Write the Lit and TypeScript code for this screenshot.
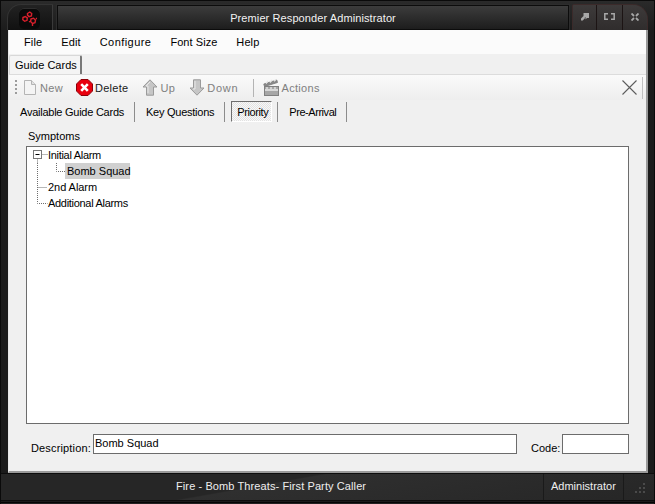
import { LitElement, html, css, svg } from "lit";
import { customElement } from "lit/decorators.js";

const newIcon = svg`<svg width="12" height="15" viewBox="0 0 12 15"><path d="M.5.5h7l4 4v10h-11z" fill="#f4f4f4" stroke="#b4b4b4"/><path d="M7.5.5v4h4" fill="#e2e2e2" stroke="#b4b4b4"/></svg>`;
const deleteIcon = svg`<svg width="17" height="17" viewBox="0 0 17 17"><path d="M5 .5h7l4.500 4.500v7l-4.500 4.500h-7l-4.500-4.500v-7z" fill="#e8000e" stroke="#8c0008" stroke-linejoin="round"/><path d="M5.200 5.200l6.600 6.600M11.800 5.200l-6.600 6.600" stroke="#fff" stroke-width="2.600"/></svg>`;
const upIcon = svg`<svg width="16" height="17" viewBox="0 0 16 17"><path d="M8 .8l7 7.200h-3.500v8.200h-7v-8.200h-3.500z" fill="#c6c6c6" stroke="#9a9a9a"/><path d="M8 3l-4 4h2v7" fill="none" stroke="#e8e8e8"/></svg>`;
const downIcon = svg`<svg width="16" height="17" viewBox="0 0 16 17"><path d="M8 16.200l7-7.200h-3.500v-8.200h-7v8.200h-3.500z" fill="#c6c6c6" stroke="#9a9a9a"/><path d="M6 2v8h-2" fill="none" stroke="#e8e8e8"/></svg>`;
const actionsIcon = svg`<svg width="17" height="17" viewBox="0 0 17 17"><path d="M1.500 7.500l13-4 -.7-2.500-13 4z" fill="#8a8a8a" stroke="#777" stroke-width=".8"/><path d="M3 4.500l2-2.500M7 3.500l2-2.500M11 2.200l2-1.700" stroke="#e6e6e6" stroke-width="1.300"/><rect x="1.500" y="7.500" width="14" height="9" fill="#a6a6a6" stroke="#808080"/><path d="M2 11h13" stroke="#e8e8e8" stroke-width="1.500"/><path d="M4 8v2M8 8v2M12 8v2" stroke="#e8e8e8" stroke-width="1.300"/></svg>`;
const logoIcon = svg`<svg width="15" height="15" viewBox="0 0 15 15" fill="none" stroke="#d8202c" stroke-width="1.400"><path d="M1 6.500l2.300-1 2 1.300-.3 2.500-2.300 1-1.900-1.500z"/><path d="M5.500 2.500l2.300-1.500 1.900 1.500-.3 2.500-2.400.6-1.500-1.500z"/><path d="M9 8l2.500-.8 2 1.800-.5 2.700-2.500.8-1.900-2z"/><path d="M10.500 13v2M14 8l1-1M7 11l1-.6"/></svg>`;
const minIcon = svg`<svg width="8" height="8" viewBox="0 0 8 8" fill="#a8a8a8"><path d="M2.500 0h5.500v5h-2l-1.500 1.500v-2.500h-2zM0 5.500l2.500-2.500 1.800 1.800-2.500 2.700h-1.800z"/></svg>`;
const maxIcon = svg`<svg width="11" height="7" viewBox="0 0 11 7" fill="none" stroke="#a8a8a8" stroke-width="1.500"><path d="M4 .8h-3.200v5.400h3.200M7 .8h3.200v5.400h-3.200"/></svg>`;
const closeIcon = svg`<svg width="8" height="8" viewBox="0 0 8 8" fill="none" stroke="#a8a8a8" stroke-width="1.800"><path d="M.5.500l2.500 2.500M7.500.500l-2.500 2.500M.5 7.500l2.500-2.500M7.500 7.500l-2.500-2.500"/></svg>`;
const xIcon = svg`<svg width="15" height="15" viewBox="0 0 15 15" stroke="#5c5c5c" stroke-width="1.100"><path d="M.5.500l14 14M14.500.500l-14 14"/></svg>`;
const grip = svg`<svg width="10" height="11" viewBox="0 0 10 11" fill="#4a4a4a"><rect x="8" y="0" width="2" height="2"/><rect x="4" y="4" width="2" height="2"/><rect x="8" y="4" width="2" height="2"/><rect x="0" y="8" width="2" height="2"/><rect x="4" y="8" width="2" height="2"/><rect x="8" y="8" width="2" height="2"/></svg>`;
const dots = "#6e6e6e";
const treeA = svg`<svg class="cn" width="21" height="16" viewBox="0 0 21 16"><rect x="6.500" y="3.500" width="8" height="8" fill="#fff" stroke="#777"/><path d="M8.500 7.500h4" stroke="#000"/><path d="M15.500 7.500h5" stroke="${dots}" stroke-dasharray="1 1"/><path d="M10.500 11.500v4.500" stroke="${dots}" stroke-dasharray="1 1"/></svg>`;
const treeChild = svg`<svg class="cn" width="38" height="16" viewBox="0 0 38 16"><path d="M10.500 0v16" stroke="${dots}" stroke-dasharray="1 1"/><path d="M29.500 0v8.500h9" fill="none" stroke="${dots}" stroke-dasharray="1 1"/></svg>`;
const treeB = svg`<svg class="cn" width="21" height="16" viewBox="0 0 21 16"><path d="M10.500 0v16M10.500 8.500h10" stroke="${dots}" stroke-dasharray="1 1"/></svg>`;
const treeC = svg`<svg class="cn" width="21" height="16" viewBox="0 0 21 16"><path d="M10.500 0v8.500h10" fill="none" stroke="${dots}" stroke-dasharray="1 1"/></svg>`;

@customElement("app-root")
export class AppRoot extends LitElement {
  static styles = css`
    :host { display: block; width: 655px; height: 504px; overflow: hidden; background: #1b1b1b; font: 11px "Liberation Sans", Arial, sans-serif; color: #000; white-space: nowrap; }
    .win { height: 504px; display: flex; flex-direction: column; box-sizing: border-box; border: 1px solid #0a0a0a; border-width: 1px 1px 0; }
    .title { height: 29px; display: flex; box-sizing: border-box; padding: 3px 6px 0 6px; background: linear-gradient(#2a2a2a, #1c1c1c); flex: none; }
    .logo { width: 46px; height: 26px; box-sizing: border-box; border: 1px solid #333; border-bottom: 0; border-right-color: #3a3a3a; border-radius: 14px 0 0 0; background: linear-gradient(#222, #111); display: flex; justify-content: center; padding-top: 3px; margin-right: 4px; }
    .logo span { width: 21px; height: 21px; background: #0a0a0a; border-radius: 5px; display: flex; align-items: center; justify-content: center; box-shadow: inset 0 1px 0 #2e2e2e; }
    .cap { width: 513px; height: 25px; margin-top: 1px; box-sizing: border-box; border: 1px solid #0c0c0c; box-shadow: 0 0 0 1px #2c2c2c; background: linear-gradient(#3c3c3c, #1d1d1d); color: #f2f2f2; display: flex; align-items: center; justify-content: center; padding-top: 1px; letter-spacing: .1px; }
    .btns { display: flex; margin-left: 3px; height: 26px; border: 1px solid #3b2a2a; border-bottom: 0; border-radius: 2px 15px 0 0; overflow: hidden; box-sizing: border-box; width: 76px; background: #3a3737; }
    .btns span { display: flex; align-items: center; justify-content: center; background: linear-gradient(#3d3a3a, #302d2d); border-right: 1px solid #1c1414; box-sizing: border-box; height: 25px; padding-bottom: 2px; }
    .btns span:nth-child(1) { width: 24px; }
    .btns span:nth-child(2) { width: 26px; }
    .btns span:nth-child(3) { width: 24px; border: 0; }
    .body { width: 640px; height: 443px; margin-left: 7px; flex: none; display: flex; flex-direction: column; background: #f0f0f0; box-sizing: border-box; border-right: 2px solid #9a9a9a; border-bottom: 2px solid #9a9a9a; border-left: 1px solid #e8e8e8; }
    .menu { height: 24px; background: #fbfbfb; display: flex; align-items: center; gap: 19px; padding-left: 15px; flex: none; }
    .menu span:nth-child(1) { letter-spacing: .15px; }
    .menu span:nth-child(2) { letter-spacing: .1px; }
    .menu span:nth-child(3) { letter-spacing: .45px; }
    .menu span:nth-child(4) { letter-spacing: .05px; }
    .menu span:nth-child(5) { letter-spacing: .1px; }
    .tabstrip { height: 20px; background: #f0f0f0; flex: none; display: flex; padding-top: 1px; box-sizing: border-box; }
    .tab { width: 73px; height: 19px; box-sizing: border-box; border-top: 1px solid #d8d8d8; border-left: 1px solid #d8d8d8; border-right: 2px solid #787878; background: #f4f4f4; border-radius: 2px 2px 0 0; display: flex; align-items: center; padding-left: 5px; }
    .panel { flex: 1; border-top: 1px solid #dcdcdc; display: flex; flex-direction: column; min-height: 0; }
    .tb { height: 25px; flex: none; background: linear-gradient(#fafafa, #eeeeee); display: flex; align-items: center; box-sizing: border-box; padding-left: 6px; color: #808080; }
    .grip { width: 2px; height: 15px; margin-right: 7px; background: repeating-linear-gradient(#9c9c9c 0 2px, transparent 2px 4px); }
    .tb span { letter-spacing: .3px; }
    .it { display: flex; align-items: center; gap: 2px; flex: none; margin-right: 13px; }
    .it.new { gap: 4px; }
    .it.up { gap: 3px; margin-right: 14px; }
    .it.down { margin-right: 0; }
    .it.down span { letter-spacing: .8px; }
    .it.act { margin-right: 0; }
    .del { color: #1a1a1a; }
    .sepv { width: 1px; height: 18px; background: #b4b4b4; flex: none; margin: 0 9px 0 14px; }
    .x { margin-left: auto; margin-right: 5px; display: flex; }
    .tbedge { width: 1px; height: 22px; background: #c0c0c0; margin-right: 3px; }
    .tabs { height: 23px; flex: none; display: flex; align-items: center; padding-left: 11px; letter-spacing: -.25px; }
    .t { display: flex; align-items: center; height: 20px; border-right: 1px solid #8c8c8c; padding: 0 10px 0 11px; }
    .t.first { padding-left: 0; }
    .t.sel { height: 21px; box-sizing: border-box; width: 41px; margin: 0 5px 0 6px; padding: 0 0 0 5px; border: 1px solid; border-color: #6e6e6e #fff #fff #6e6e6e; background: repeating-conic-gradient(#f8f8f8 0 25%, #e2e2e2 0 50%) 0 0 / 2px 2px; letter-spacing: -.4px; }
    .t.pre { letter-spacing: -.45px; }
    .bar { width: 1px; height: 20px; background: #8c8c8c; }
    .content { padding: 5px 17px 0 17px; flex: 1; display: flex; flex-direction: column; }
    .lab { padding: 0 0 2px 2px; height: 18px; box-sizing: border-box; display: flex; align-items: center; }
    .tree { height: 278px; box-sizing: border-box; background: #fff; border: 1px solid #6c6c6c; display: flex; flex-direction: column; flex: none; }
    .row { height: 16px; display: flex; align-items: center; }
    .cn { display: block; flex: none; }
    .row b { font-weight: normal; letter-spacing: -.3px; }
    .row b.hi { background: #d0d0d0; height: 16px; line-height: 16px; padding: 0 2px; width: 61px; letter-spacing: 0; }
    .row b.n { letter-spacing: -.05px; }
    .foot { display: flex; align-items: flex-start; margin-top: 10px; height: 20px; }
    .foot label { box-sizing: border-box; width: 67px; padding: 8px 0 0 5px; line-height: 13px; letter-spacing: .15px; }
    .inp { box-sizing: border-box; height: 20px; background: #fff; border: 1px solid #6c6c6c; padding: 1px 0 0 1px; line-height: 15px; }
    .inp.d { width: 424px; }
    .inp.c { width: 67px; }
    .foot label.cl { width: 45px; padding-left: 14px; letter-spacing: 0; }
    .status { height: 26px; margin-top: 1px; flex: none; display: flex; align-items: center; color: #eee; background: linear-gradient(170deg, #262626 0 40%, #2f2f2f 41%, #262626); box-shadow: 0 -1px 0 #0d0d0d, 0 1px 0 #0d0d0d; }
    .status .m { width: 542px; padding: 0 0 2px 175px; box-sizing: border-box; letter-spacing: .1px; }
    .status .a { width: 81px; height: 26px; display: flex; align-items: center; border-left: 1px solid #1a1a1a; border-right: 1px solid #1a1a1a; box-sizing: border-box; padding: 0 0 2px 7px; }
    .status .g { margin-left: 11px; margin-top: 3px; display: flex; }
    .bot { flex: 1; margin-top: 2px; border-top: 1px solid #050505; background: #222; }
  `;

  render() {
    return html`<div class="win">
      <div class="title">
        <div class="logo"><span>${logoIcon}</span></div>
        <div class="cap">Premier Responder Administrator</div>
        <div class="btns"><span>${minIcon}</span><span>${maxIcon}</span><span>${closeIcon}</span></div>
      </div>
      <div class="body">
        <div class="menu"><span>File</span><span>Edit</span><span>Configure</span><span>Font Size</span><span>Help</span></div>
        <div class="tabstrip"><div class="tab">Guide Cards</div></div>
        <div class="panel">
          <div class="tb">
            <div class="grip"></div>
            <div class="it new">${newIcon}<span>New</span></div>
            <div class="it del">${deleteIcon}<span>Delete</span></div>
            <div class="it up">${upIcon}<span>Up</span></div>
            <div class="it down">${downIcon}<span>Down</span></div>
            <div class="sepv"></div>
            <div class="it act">${actionsIcon}<span>Actions</span></div>
            <div class="x">${xIcon}</div>
            <div class="tbedge"></div>
          </div>
          <div class="tabs">
            <div class="t first">Available Guide Cards</div>
            <div class="t">Key Questions</div>
            <div class="t sel">Priority</div>
            <div class="bar"></div>
            <div class="t pre">Pre-Arrival</div>
          </div>
          <div class="content">
            <div class="lab">Symptoms</div>
            <div class="tree">
              <div class="row">${treeA}<b>Initial Alarm</b></div>
              <div class="row">${treeChild}<b class="hi">Bomb Squad</b></div>
              <div class="row">${treeB}<b class="n">2nd Alarm</b></div>
              <div class="row">${treeC}<b>Additional Alarms</b></div>
            </div>
            <div class="foot">
              <label>Description:</label><div class="inp d">Bomb Squad</div>
              <label class="cl">Code:</label><div class="inp c"></div>
            </div>
          </div>
        </div>
      </div>
      <div class="status">
        <div class="m">Fire - Bomb Threats- First Party Caller</div>
        <div class="a">Administrator</div>
        <div class="g">${grip}</div>
      </div>
      <div class="bot"></div>
    </div>`;
  }
}
